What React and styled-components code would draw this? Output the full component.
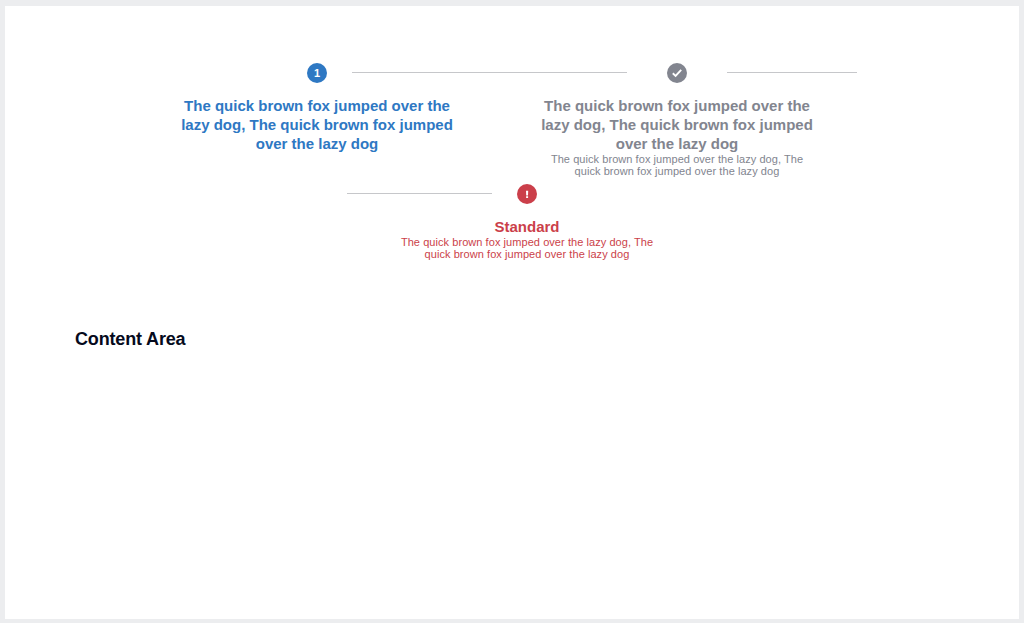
import React from "react";
import styled, { createGlobalStyle } from "styled-components";

const GlobalStyle = createGlobalStyle`
  * { box-sizing: border-box; }
  body {
    margin: 0;
    background: #ecedef;
    font-family: "Liberation Sans", Arial, sans-serif;
  }
`;

const Page = styled.main`
  height: 623px;
  padding: 6px 5px 4px;
  overflow: hidden;
`;

const Panel = styled.div`
  height: 100%;
  padding: 57px 70px 0;
  background: #fff;
`;

const Stepper = styled.div`
  display: flex;
  flex-direction: column;
`;

const StepRow = styled.div`
  display: flex;
  margin-left: ${(p) => p.$indent}px;
  height: ${(p) => p.$height}px;
`;

const StepItem = styled.section`
  width: 360px;
  flex: none;
  color: ${(p) => p.$color};
  text-align: center;
`;

const Track = styled.div`
  display: flex;
  gap: ${(p) => p.$gap}px;
  height: 20px;
`;

const Connector = styled.div`
  flex: 1;
  height: 1px;
  margin-top: 9px;
  background: ${(p) => (p.$visible ? "#c6c7ca" : "transparent")};
`;

const Badge = styled.div`
  display: flex;
  align-items: center;
  justify-content: center;
  width: 20px;
  height: 20px;
  border-radius: 50%;
  background: ${(p) => p.$color};
  color: #fff;
  font-size: 11px;
  font-weight: 700;
  line-height: 20px;
`;

const Title = styled.h3`
  width: 290px;
  margin: 13px auto 0;
  font-size: 15px;
  font-weight: 700;
  line-height: 19px;
`;

const Description = styled.p`
  width: 270px;
  margin: 0 auto;
  font-size: 11px;
  line-height: 12px;
  letter-spacing: 0.06px;
`;

const Heading = styled.h2`
  margin: 64px 0 0;
  color: #050a1c;
  font-size: 18px;
  font-weight: 700;
  line-height: 24px;
  letter-spacing: -0.16px;
`;

const CheckIcon = () => (
  <svg width="20" height="20" viewBox="0 0 20 20" fill="none" stroke="#fff" strokeWidth="1.9">
    <path d="M5.8 10.2 8.6 12.9 14.2 6.9" />
  </svg>
);

const AlertIcon = () => (
  <svg width="20" height="20" viewBox="0 0 20 20" fill="#fff">
    <path d="M9 6.8h2.2l-.2 4.6H9.2zM9.1 12.2h2v1.9h-2z" />
  </svg>
);

function Step({ color, icon, gap = 25, before, after, title, description }) {
  return (
    <StepItem $color={color}>
      <Track $gap={gap}>
        <Connector $visible={before} />
        <Badge $color={color}>{icon}</Badge>
        <Connector $visible={after} />
      </Track>
      <Title>{title}</Title>
      {description && <Description>{description}</Description>}
    </StepItem>
  );
}

const LONG_TEXT =
  "The quick brown fox jumped over the lazy dog, The quick brown fox jumped over the lazy dog";

export default function App() {
  return (
    <>
      <GlobalStyle />
      <Page>
        <Panel>
          <Stepper>
            <StepRow $indent={62} $height={121}>
              <Step color="#2e78c3" icon="1" after title={LONG_TEXT} />
              <Step
                color="#82858f"
                icon={<CheckIcon />}
                gap={40}
                before
                after
                title={LONG_TEXT}
                description={LONG_TEXT}
              />
            </StepRow>
            <StepRow $indent={272} $height={79}>
              <Step
                color="#cb3f4a"
                icon={<AlertIcon />}
                before
                title="Standard"
                description={LONG_TEXT}
              />
            </StepRow>
          </Stepper>
          <Heading>Content Area</Heading>
        </Panel>
      </Page>
    </>
  );
}
